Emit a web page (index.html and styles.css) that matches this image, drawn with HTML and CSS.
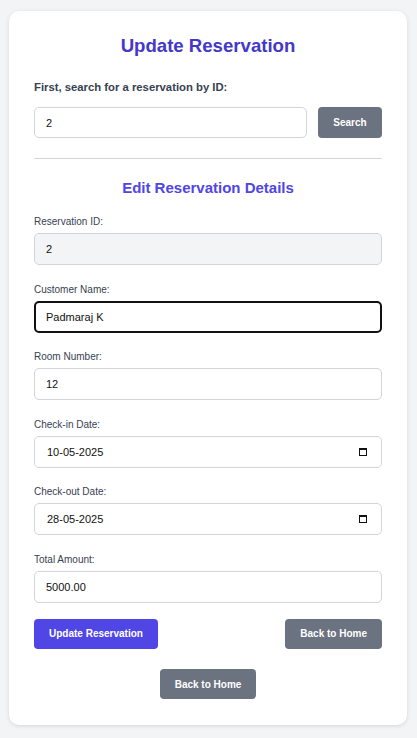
FILE: index.html
```html
<!DOCTYPE html>
<html lang="en">
<head>
<meta charset="utf-8">
<title>Update Reservation</title>
<link rel="stylesheet" href="styles.css">
</head>
<body>
<main class="card">
  <h1 class="title">Update Reservation</h1>
  <section class="search">
    <label class="search-label" for="searchId">First, search for a reservation by ID:</label>
    <div class="search-row">
      <input class="input input-search" id="searchId" type="text" value="2">
      <button class="btn btn-gray btn-search" type="button">Search</button>
    </div>
  </section>
  <hr class="divider">
  <h2 class="subtitle">Edit Reservation Details</h2>
  <form class="form">
    <div class="field">
      <label class="label">Reservation ID:</label>
      <input class="input input-readonly" type="text" value="2" readonly>
    </div>
    <div class="field">
      <label class="label">Customer Name:</label>
      <input class="input input-focus" type="text" value="Padmaraj K">
    </div>
    <div class="field">
      <label class="label">Room Number:</label>
      <input class="input" type="text" value="12">
    </div>
    <div class="field">
      <label class="label">Check-in Date:</label>
      <div class="input date">
        <span class="date-text">10-05-2025</span>
        <svg class="cal" width="8" height="8" viewBox="0 0 8 8"><rect x="0.5" y="0.5" width="7" height="7" fill="none" stroke="#111" stroke-width="1"/><rect x="0" y="0" width="8" height="2" fill="#111"/></svg>
      </div>
    </div>
    <div class="field">
      <label class="label">Check-out Date:</label>
      <div class="input date">
        <span class="date-text">28-05-2025</span>
        <svg class="cal" width="8" height="8" viewBox="0 0 8 8"><rect x="0.5" y="0.5" width="7" height="7" fill="none" stroke="#111" stroke-width="1"/><rect x="0" y="0" width="8" height="2" fill="#111"/></svg>
      </div>
    </div>
    <div class="field">
      <label class="label">Total Amount:</label>
      <input class="input" type="text" value="5000.00">
    </div>
    <div class="actions">
      <button class="btn btn-primary" type="button">Update Reservation</button>
      <button class="btn btn-gray" type="button">Back to Home</button>
    </div>
  </form>
  <div class="footer">
    <button class="btn btn-gray" type="button">Back to Home</button>
  </div>
</main>
</body>
</html>
```
FILE: styles.css
```css
* { box-sizing: border-box; }
html, body { margin: 0; }
body {
  background: #f3f4f6;
  font-family: "Liberation Sans", Arial, sans-serif;
  padding: 11px 10px 14px 9px;
  color: #111;
}
.card {
  background: #fff;
  border-radius: 10px;
  box-shadow: 0 1px 4px rgba(0,0,0,0.12);
  padding: 23px 25px 26px;
}
.title {
  margin: 0;
  text-align: center;
  color: #4338ca;
  font-size: 18.6px;
  font-weight: 700;
  line-height: 24px;
}
.search { margin-top: 22px; }
.search-label {
  display: block;
  font-size: 11.3px;
  font-weight: 700;
  color: #374151;
  line-height: 14px;
}
.search-row {
  display: flex;
  gap: 11px;
  margin-top: 13px;
}
.search-row .input { flex: 1; }
.input {
  display: block;
  width: 100%;
  height: 32px;
  border: 1px solid #d1d5db;
  border-radius: 5px;
  padding: 0 11px;
  font-family: "Liberation Sans", Arial, sans-serif;
  font-size: 11px;
  color: #111;
  background: #fff;
  outline: none;
}
.input-search { height: 31px; }
.input-readonly { background: #f3f4f6; }
.input-focus {
  border: 2px solid #111;
  padding: 0 10px;
}
.btn {
  border: none;
  border-radius: 4px;
  color: #fff;
  font-family: "Liberation Sans", Arial, sans-serif;
  font-size: 10px;
  font-weight: 700;
  height: 30px;
  padding: 0 15px;
  cursor: pointer;
}
.btn-gray { background: #6b7280; }
.btn-primary { background: #4f46e5; }
.btn-search { width: 64px; height: 31px; padding: 0; }
.divider {
  border: none;
  border-top: 1px solid #d1d5db;
  margin: 20px 0 0;
}
.subtitle {
  margin: 20px 0 0;
  text-align: center;
  color: #4f46e5;
  font-size: 15px;
  font-weight: 700;
  line-height: 18px;
}
.form {
  margin-top: 18px;
  display: flex;
  flex-direction: column;
  gap: 17.5px;
}
.field { display: flex; flex-direction: column; }
.label {
  font-size: 10px;
  color: #374151;
  line-height: 13px;
  margin-bottom: 5px;
}
.date {
  display: flex;
  align-items: center;
  justify-content: space-between;
  padding: 0 14px 0 12px;
}
.date-text { font-size: 11px; }
.cal { display: block; }
.actions {
  display: flex;
  justify-content: space-between;
  margin-top: -1.5px;
}
.footer {
  display: flex;
  justify-content: center;
  margin-top: 20.5px;
}
```
